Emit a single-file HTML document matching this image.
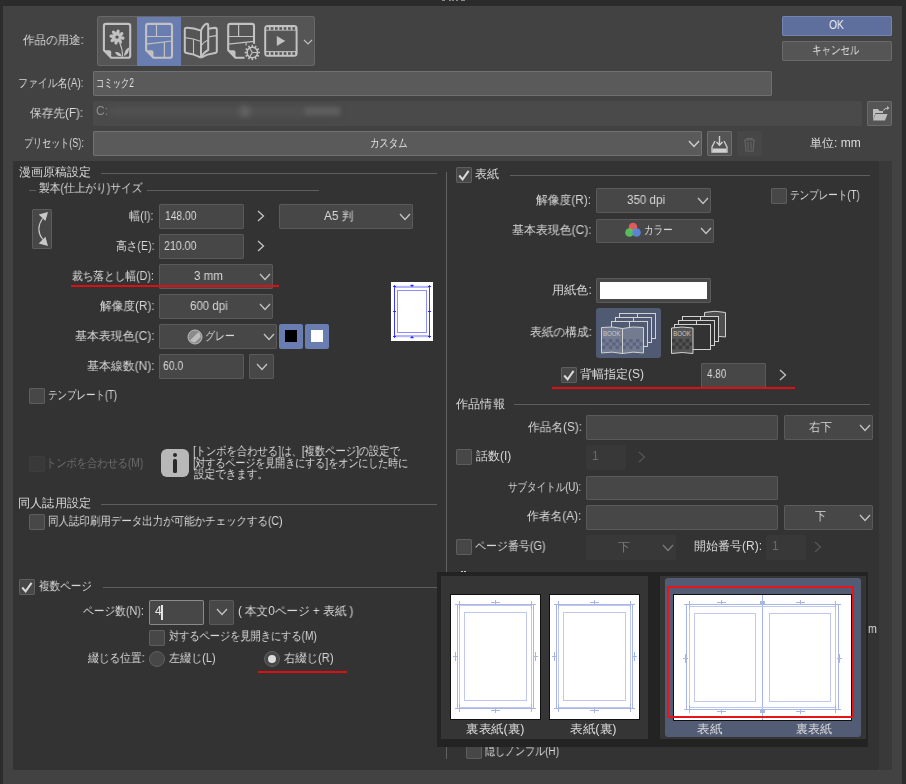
<!DOCTYPE html>
<html><head><meta charset="utf-8"><style>
html,body{margin:0;padding:0;width:906px;height:784px;overflow:hidden;background:#424242}
body{position:relative;font-family:"Liberation Sans",sans-serif;font-size:12px}
.a{position:absolute;box-sizing:border-box}
.t{white-space:nowrap;will-change:transform}
svg.a{overflow:visible}
</style></head><body>
<div class="a" style="left:0px;top:0px;width:906px;height:784px;background:#424242;"></div>
<div class="a" style="left:0px;top:0px;width:906px;height:6px;background:#2b2b2b;"></div>
<div class="a" style="left:0px;top:0px;width:3px;height:784px;background:#2c2c2c;"></div>
<div class="a" style="left:902px;top:0px;width:4px;height:784px;background:#2c2c2c;"></div>
<div class="a" style="left:442px;top:0px;width:3px;height:1px;background:#8a8a8a;"></div>
<div class="a" style="left:449px;top:0px;width:2px;height:1px;background:#8a8a8a;"></div>
<div class="a" style="left:452px;top:0px;width:2px;height:1px;background:#8a8a8a;"></div>
<div class="a" style="left:456px;top:0px;width:2px;height:1px;background:#8a8a8a;"></div>
<div class="a" style="left:461px;top:0px;width:4px;height:1px;background:#8a8a8a;"></div>
<div class="a t" style="left:23.00px;top:33.3px;line-height:14px;font-size:12px;color:#d8d8d8;transform:scaleX(0.9597);transform-origin:0 0;">作品の用途:</div>
<div class="a" style="left:97px;top:16px;width:218px;height:50px;background:#555555;box-shadow:inset 0 0 0 1px #686868;border-radius:3px;"></div>
<div class="a" style="left:137px;top:16.5px;width:44px;height:49.0px;background:#6a7db0;"></div>
<svg class="a" style="left:96px;top:18px;" width="44" height="44" viewBox="0 0 44 44">
<path d="M7.9 32.3 L7.9 8 Q7.9 5.9 10 5.9 L32.1 5.9 Q34.2 5.9 34.2 8 L34.2 37.7 Q34.2 39.8 32.1 39.8 L15.2 39.8 Z" fill="none" stroke="#c2c2c2" stroke-width="2.1" stroke-linejoin="round"/>
<path d="M7.9 32.3 L13.2 32.3 Q15.2 32.3 15.2 34.3 L15.2 39.8 Z" fill="#c2c2c2"/>
<g fill="#c2c2c2" transform="translate(21 19.1)"><ellipse cx="0" cy="-4.6" rx="1.75" ry="3.1" transform="rotate(10)"/><ellipse cx="0" cy="-4.6" rx="1.75" ry="3.1" transform="rotate(55)"/><ellipse cx="0" cy="-4.6" rx="1.75" ry="3.1" transform="rotate(100)"/><ellipse cx="0" cy="-4.6" rx="1.75" ry="3.1" transform="rotate(145)"/><ellipse cx="0" cy="-4.6" rx="1.75" ry="3.1" transform="rotate(190)"/><ellipse cx="0" cy="-4.6" rx="1.75" ry="3.1" transform="rotate(235)"/><ellipse cx="0" cy="-4.6" rx="1.75" ry="3.1" transform="rotate(280)"/><ellipse cx="0" cy="-4.6" rx="1.75" ry="3.1" transform="rotate(325)"/><circle r="2.6"/></g>
<circle cx="21" cy="19.1" r="1.7" fill="#555"/>
<path d="M23.8 25 Q26.6 31 26.6 38.8" fill="none" stroke="#c2c2c2" stroke-width="1.1"/>
<path d="M19 34.2 Q23.5 33.2 25.8 38.2 Q21 38.8 19 34.2 Z M28 38.2 Q28.3 31.8 33 29.6 Q33.6 35.6 28 38.2 Z" fill="#c2c2c2"/>
</svg>
<svg class="a" style="left:138px;top:18px;" width="44" height="44" viewBox="0 0 44 44">
<path d="M8.1 32.3 L8.1 8 Q8.1 5.9 10.2 5.9 L31.9 5.9 Q34 5.9 34 8 L34 37.7 Q34 39.8 31.9 39.8 L15.5 39.8 Z" fill="none" stroke="#c2c2c2" stroke-width="2.1" stroke-linejoin="round"/>
<path d="M8.1 32.3 L13.5 32.3 Q15.5 32.3 15.5 34.3 L15.5 39.8 Z" fill="#c2c2c2"/>
<path d="M18.5 5.9 L18.5 18.5 M8.1 18.5 L34 18.5 M8.1 26.1 L34 23 M26.4 24.3 L26.4 39.8" fill="none" stroke="#c2c2c2" stroke-width="1.2"/>
</svg>
<svg class="a" style="left:180px;top:18px;" width="44" height="44" viewBox="0 0 44 44">
<g fill="none" stroke="#c2c2c2" stroke-width="2" stroke-linejoin="round">
<path d="M21 12.6 Q13 9.6 6.6 9.8 Q4.8 9.8 4.8 11.6 L4.8 33 Q4.8 34.8 6.6 35 Q14 36 21 39.6"/>
<path d="M21 39.6 L21 12.6 Q23 7.2 26.6 5.8 Q28.2 5.4 28.2 7.2 L28.2 32 Q23.8 34.2 21 39.6"/>
<path d="M28.2 10.8 L35 9.8 Q36.8 9.8 36.8 11.6 L36.8 33 Q36.8 34.8 35 35 Q27 36 21 39.6"/>
</g>
<path d="M5 19.6 Q14 20.4 21 23.5 M13.5 21 L13.5 36.3 M21.5 27.5 Q24 23.6 28 22 M28.2 19 Q33 18 36.8 17.6" fill="none" stroke="#c2c2c2" stroke-width="1.1"/>
</svg>
<svg class="a" style="left:222px;top:18px;" width="44" height="44" viewBox="0 0 44 44">
<path d="M22.5 39.8 L13.5 39.8 L6.2 32.3 L6.2 8 Q6.2 5.9 8.3 5.9 L29.9 5.9 Q32 5.9 32 8 L32 25.8" fill="none" stroke="#c2c2c2" stroke-width="2.1" stroke-linejoin="round"/>
<path d="M6.2 32.3 L11.5 32.3 Q13.5 32.3 13.5 34.3 L13.5 39.8 Z" fill="#c2c2c2"/>
<path d="M16.6 5.9 L16.6 18.5 M6.2 18.5 L32 18.5 M6.2 26.1 L32 23.3 M24.1 24.2 L24.1 27.5" fill="none" stroke="#c2c2c2" stroke-width="1.2"/>
<g transform="translate(30.3 34.5)">
<circle r="5.8" fill="#555"/>
<circle r="5.2" fill="none" stroke="#c2c2c2" stroke-width="1.4"/>
<g fill="#c2c2c2"><rect x="-0.8" y="-7.6" width="1.6" height="2.6" transform="rotate(0)"/><rect x="-0.8" y="-7.6" width="1.6" height="2.6" transform="rotate(30)"/><rect x="-0.8" y="-7.6" width="1.6" height="2.6" transform="rotate(60)"/><rect x="-0.8" y="-7.6" width="1.6" height="2.6" transform="rotate(90)"/><rect x="-0.8" y="-7.6" width="1.6" height="2.6" transform="rotate(120)"/><rect x="-0.8" y="-7.6" width="1.6" height="2.6" transform="rotate(150)"/><rect x="-0.8" y="-7.6" width="1.6" height="2.6" transform="rotate(180)"/><rect x="-0.8" y="-7.6" width="1.6" height="2.6" transform="rotate(210)"/><rect x="-0.8" y="-7.6" width="1.6" height="2.6" transform="rotate(240)"/><rect x="-0.8" y="-7.6" width="1.6" height="2.6" transform="rotate(270)"/><rect x="-0.8" y="-7.6" width="1.6" height="2.6" transform="rotate(300)"/><rect x="-0.8" y="-7.6" width="1.6" height="2.6" transform="rotate(330)"/></g>
<path d="M0 0 L5 0 M0 0 L-2.5 4.3 M0 0 L-2.5 -4.3" stroke="#c2c2c2" stroke-width="1.2"/>
</g>
</svg>
<svg class="a" style="left:260px;top:18px;" width="44" height="44" viewBox="0 0 44 44">
<rect x="5.2" y="8" width="31.4" height="29.7" rx="2.5" fill="none" stroke="#c2c2c2" stroke-width="2"/>
<rect x="5.2" y="8" width="31.4" height="4.6" fill="#c2c2c2"/>
<rect x="5.2" y="33.1" width="31.4" height="4.6" fill="#c2c2c2"/>
<g fill="#575757"><rect x="6.30" y="9.2" width="2.7" height="2.6"/><rect x="6.30" y="34.2" width="2.7" height="2.6"/><rect x="10.65" y="9.2" width="2.7" height="2.6"/><rect x="10.65" y="34.2" width="2.7" height="2.6"/><rect x="15.00" y="9.2" width="2.7" height="2.6"/><rect x="15.00" y="34.2" width="2.7" height="2.6"/><rect x="19.35" y="9.2" width="2.7" height="2.6"/><rect x="19.35" y="34.2" width="2.7" height="2.6"/><rect x="23.70" y="9.2" width="2.7" height="2.6"/><rect x="23.70" y="34.2" width="2.7" height="2.6"/><rect x="28.05" y="9.2" width="2.7" height="2.6"/><rect x="28.05" y="34.2" width="2.7" height="2.6"/><rect x="32.40" y="9.2" width="2.7" height="2.6"/><rect x="32.40" y="34.2" width="2.7" height="2.6"/></g>
<path d="M16.8 18 L16.8 28 L25.3 23 Z" fill="#c2c2c2"/>
</svg>
<svg class="a" style="left:302.5px;top:38.5px;" width="10" height="6" viewBox="0 0 10 6"><path d="M1 1 L5.0 5 L9 1" fill="none" stroke="#bdbdbd" stroke-width="1.2"/></svg>
<div class="a" style="left:782px;top:16px;width:110px;height:20px;background:#5f6f9d;box-shadow:inset 0 0 0 1px #7483b0;border-radius:2px;"></div>
<div class="a t" style="left:828.70px;top:18.3px;line-height:14px;font-size:12px;color:#eeeeee;transform:scaleX(0.8588);transform-origin:0 0;">OK</div>
<div class="a" style="left:782px;top:41px;width:110px;height:20px;background:#555555;box-shadow:inset 0 0 0 1px #6a6a6a;border-radius:2px;"></div>
<div class="a t" style="left:811.76px;top:43.3px;line-height:14px;font-size:12px;color:#e0e0e0;transform:scaleX(0.7915);transform-origin:0 0;">キャンセル</div>
<div class="a t" style="left:18.18px;top:75.8px;line-height:14px;font-size:12px;color:#d8d8d8;transform:scaleX(0.8247);transform-origin:0 0;">ファイル名(A):</div>
<div class="a" style="left:93px;top:71px;width:679px;height:25px;background:#5a5a5a;box-shadow:inset 0 0 0 1px #707070;border-radius:2px;"></div>
<div class="a t" style="left:95.62px;top:75.8px;line-height:14px;font-size:12px;color:#e4e4e4;transform:scaleX(0.6923);transform-origin:0 0;">コミック2</div>
<div class="a t" style="left:30.00px;top:105.8px;line-height:14px;font-size:12px;color:#d8d8d8;transform:scaleX(0.9722);transform-origin:0 0;">保存先(F):</div>
<div class="a" style="left:93px;top:101px;width:769px;height:25px;background:#4a4a4a;border-radius:2px;"></div>
<div class="a t" style="left:96.22px;top:103.8px;line-height:14px;font-size:12px;color:#8c8c8c;transform:scaleX(0.9800);transform-origin:0 0;">C:</div>
<div class="a" style="left:108px;top:107px;width:232px;height:9px;background:#555555;filter:blur(3px);opacity:.7"></div>
<div class="a" style="left:240px;top:106px;width:10px;height:11px;background:#666;filter:blur(3px);border-radius:5px"></div>
<div class="a" style="left:305px;top:107px;width:35px;height:8px;background:#5e5e5e;filter:blur(2px)"></div>
<div class="a" style="left:867px;top:101px;width:25px;height:25px;background:#555555;box-shadow:inset 0 0 0 1px #6a6a6a;border-radius:2px;"></div>
<svg class="a" style="left:868px;top:102px;" width="24" height="24" viewBox="0 0 24 24"><path d="M5 7 L10 7 L11.5 9 L15 9 L15 11 L7.5 11 L5 18 Z" fill="#bdbdbd"/><path d="M7.5 12 L19.5 12 L17 18.5 L5 18.5 Z" fill="#bdbdbd"/><path d="M15.5 8.5 Q17 6 20 6" fill="none" stroke="#bdbdbd" stroke-width="1.2"/><path d="M19 4 L21.5 6 L19 8 Z" fill="#bdbdbd"/></svg>
<div class="a t" style="left:23.75px;top:135.8px;line-height:14px;font-size:12px;color:#d8d8d8;transform:scaleX(0.7532);transform-origin:0 0;">プリセット(S):</div>
<div class="a" style="left:93px;top:131px;width:609px;height:25px;background:#5a5a5a;box-shadow:inset 0 0 0 1px #727272;border-radius:2px;"></div>
<div class="a t" style="left:370.22px;top:135.8px;line-height:14px;font-size:12px;color:#e4e4e4;transform:scaleX(0.7826);transform-origin:0 0;">カスタム</div>
<svg class="a" style="left:687.5px;top:139.75px;" width="12" height="7.5" viewBox="0 0 12 7.5"><path d="M1 1 L6.0 6.5 L11 1" fill="none" stroke="#cfcfcf" stroke-width="1.4"/></svg>
<div class="a" style="left:707px;top:131px;width:25px;height:25px;background:#555555;box-shadow:inset 0 0 0 1px #6d6d6d;border-radius:2px;"></div>
<svg class="a" style="left:707px;top:131px;" width="25" height="25" viewBox="0 0 25 25"><path d="M8 10 L5 16 L5 21 L20 21 L20 16 L17 10" fill="none" stroke="#d0d0d0" stroke-width="1.3"/><rect x="5.5" y="17.5" width="14" height="3.5" fill="#d0d0d0"/><path d="M12.5 5 L12.5 14 M9.5 11 L12.5 14.2 L15.5 11" fill="none" stroke="#d0d0d0" stroke-width="1.4"/></svg>
<div class="a" style="left:737px;top:131px;width:25px;height:25px;background:#474747;border-radius:2px;"></div>
<svg class="a" style="left:737px;top:131px;" width="25" height="25" viewBox="0 0 25 25"><path d="M7 9 L18 9 M10 9 L10 7.5 L15 7.5 L15 9 M8 9.5 L9 20 L16 20 L17 9.5 M11 11 L11 18.5 M14 11 L14 18.5" fill="none" stroke="#666" stroke-width="1.1"/></svg>
<div class="a t" style="left:810.00px;top:135.8px;line-height:14px;font-size:12px;color:#dcdcdc;transform:scaleX(1.0000);transform-origin:0 0;">単位: mm</div>
<div class="a" style="left:13px;top:161px;width:866px;height:609px;background:#333333;"></div>
<div class="a" style="left:879px;top:161px;width:13px;height:609px;background:#393939;"></div>
<div class="a" style="left:446px;top:172px;width:1px;height:587px;background:#616161"></div>
<div class="a t" style="left:19.00px;top:164.8px;line-height:14px;font-size:12px;color:#d8d8d8;transform:scaleX(1.0000);transform-origin:0 0;">漫画原稿設定</div>
<div class="a" style="left:101px;top:173px;width:336px;height:1px;background:#5e5e5e"></div>
<div class="a" style="left:29px;top:190px;width:7px;height:1px;background:#5e5e5e"></div>
<div class="a t" style="left:38.51px;top:181.3px;line-height:14px;font-size:12px;color:#d8d8d8;transform:scaleX(0.8913);transform-origin:0 0;">製本(仕上がり)サイズ</div>
<div class="a" style="left:147px;top:190px;width:172px;height:1px;background:#5e5e5e"></div>
<div class="a" style="left:32px;top:209px;width:20px;height:40px;background:#474747;box-shadow:inset 0 0 0 1px #5c5c5c;border-radius:2px;"></div>
<svg class="a" style="left:32px;top:209px;" width="20" height="40" viewBox="0 0 20 40"><path d="M10.5 9.5 Q3 20.5 10.8 30.5" fill="none" stroke="#c8c8c8" stroke-width="1.1"/><path d="M6.7 5.5 L16 3 L13.4 12 Z M6.7 34.5 L16 37 L13.4 27.8 Z" fill="#c8c8c8"/></svg>
<div class="a t" style="left:129.00px;top:208.8px;line-height:14px;font-size:12px;color:#d8d8d8;transform:scaleX(0.9231);transform-origin:0 0;">幅(I):</div>
<div class="a" style="left:159px;top:204px;width:85px;height:25px;background:#474747;box-shadow:inset 0 0 0 1px #5a5a5a;border-radius:2px;"></div>
<div class="a t" style="left:164.64px;top:208.60000000000002px;line-height:14px;font-size:12px;color:#d8d8d8;transform:scaleX(0.8571);transform-origin:0 0;">148.00</div>
<svg class="a" style="left:257.25px;top:210.0px;" width="7.5" height="12" viewBox="0 0 7.5 12"><path d="M1 1 L6.5 6.0 L1 11" fill="none" stroke="#c4c4c4" stroke-width="1.3"/></svg>
<div class="a" style="left:279px;top:204px;width:134px;height:25px;background:#474747;box-shadow:inset 0 0 0 1px #5a5a5a;border-radius:2px;"></div>
<svg class="a" style="left:398.6px;top:212.75px;" width="12" height="7.5" viewBox="0 0 12 7.5"><path d="M1 1 L6.0 6.5 L11 1" fill="none" stroke="#c4c4c4" stroke-width="1.3"/></svg>
<div class="a t" style="left:324.45px;top:208.8px;line-height:14px;font-size:12px;color:#d8d8d8;transform:scaleX(0.9828);transform-origin:0 0;">A5 判</div>
<div class="a t" style="left:115.61px;top:238.8px;line-height:14px;font-size:12px;color:#d8d8d8;transform:scaleX(0.8902);transform-origin:0 0;">高さ(E):</div>
<div class="a" style="left:159px;top:234px;width:85px;height:25px;background:#474747;box-shadow:inset 0 0 0 1px #5a5a5a;border-radius:2px;"></div>
<div class="a t" style="left:163.81px;top:238.60000000000002px;line-height:14px;font-size:12px;color:#d8d8d8;transform:scaleX(0.8857);transform-origin:0 0;">210.00</div>
<svg class="a" style="left:257.25px;top:240.0px;" width="7.5" height="12" viewBox="0 0 7.5 12"><path d="M1 1 L6.5 6.0 L1 11" fill="none" stroke="#c4c4c4" stroke-width="1.3"/></svg>
<div class="a t" style="left:72.11px;top:268.8px;line-height:14px;font-size:12px;color:#d8d8d8;transform:scaleX(0.8889);transform-origin:0 0;">裁ち落とし幅(D):</div>
<div class="a" style="left:159px;top:264px;width:114px;height:25px;background:#474747;box-shadow:inset 0 0 0 1px #5a5a5a;border-radius:2px;"></div>
<svg class="a" style="left:258.6px;top:272.75px;" width="12" height="7.5" viewBox="0 0 12 7.5"><path d="M1 1 L6.0 6.5 L11 1" fill="none" stroke="#c4c4c4" stroke-width="1.3"/></svg>
<div class="a t" style="left:194.34px;top:268.8px;line-height:14px;font-size:12px;color:#d8d8d8;transform:scaleX(0.9643);transform-origin:0 0;">3 mm</div>
<div class="a" style="left:71px;top:284.5px;width:208px;height:2.5px;background:#dc1014"></div>
<div class="a t" style="left:99.50px;top:298.8px;line-height:14px;font-size:12px;color:#d8d8d8;transform:scaleX(0.9727);transform-origin:0 0;">解像度(R):</div>
<div class="a" style="left:159px;top:294px;width:114px;height:25px;background:#474747;box-shadow:inset 0 0 0 1px #5a5a5a;border-radius:2px;"></div>
<svg class="a" style="left:258.6px;top:302.75px;" width="12" height="7.5" viewBox="0 0 12 7.5"><path d="M1 1 L6.0 6.5 L11 1" fill="none" stroke="#c4c4c4" stroke-width="1.3"/></svg>
<div class="a t" style="left:190.44px;top:298.8px;line-height:14px;font-size:12px;color:#d8d8d8;transform:scaleX(0.9579);transform-origin:0 0;">600 dpi</div>
<div class="a t" style="left:74.51px;top:328.8px;line-height:14px;font-size:12px;color:#d8d8d8;transform:scaleX(0.9936);transform-origin:0 0;">基本表現色(C):</div>
<div class="a" style="left:159px;top:324px;width:118px;height:25px;background:#474747;box-shadow:inset 0 0 0 1px #5a5a5a;border-radius:2px;"></div>
<svg class="a" style="left:262.6px;top:332.75px;" width="12" height="7.5" viewBox="0 0 12 7.5"><path d="M1 1 L6.0 6.5 L11 1" fill="none" stroke="#c4c4c4" stroke-width="1.3"/></svg>
<svg class="a" style="left:187px;top:329px;" width="16" height="16" viewBox="0 0 16 16"><circle cx="8" cy="8" r="7" fill="#8a8a8a" stroke="#bbb" stroke-width="1"/><path d="M3 11.5 L11.5 3 Q14 5 13.5 8 L8 13.5 Q5 13.5 3 11.5Z" fill="#bdbdbd"/></svg>
<div class="a t" style="left:204.94px;top:328.8px;line-height:14px;font-size:12px;color:#d8d8d8;transform:scaleX(0.8303);transform-origin:0 0;">グレー</div>
<div class="a" style="left:279px;top:324px;width:24px;height:25px;background:#6a7db0;border-radius:2px;"></div>
<div class="a" style="left:285px;top:330px;width:12px;height:12px;background:#000;"></div>
<div class="a" style="left:305px;top:324px;width:24px;height:25px;background:#6a7db0;border-radius:2px;"></div>
<div class="a" style="left:311px;top:330px;width:12px;height:12px;background:#fff;"></div>
<div class="a t" style="left:86.51px;top:358.8px;line-height:14px;font-size:12px;color:#d8d8d8;transform:scaleX(0.9924);transform-origin:0 0;">基本線数(N):</div>
<div class="a" style="left:159px;top:354px;width:85px;height:25px;background:#474747;box-shadow:inset 0 0 0 1px #5a5a5a;border-radius:2px;"></div>
<div class="a t" style="left:163.44px;top:358.6px;line-height:14px;font-size:12px;color:#d8d8d8;transform:scaleX(0.8636);transform-origin:0 0;">60.0</div>
<div class="a" style="left:249px;top:354px;width:25px;height:25px;background:#474747;box-shadow:inset 0 0 0 1px #5a5a5a;border-radius:2px;"></div>
<svg class="a" style="left:255.5px;top:362.75px;" width="12" height="7.5" viewBox="0 0 12 7.5"><path d="M1 1 L6.0 6.5 L11 1" fill="none" stroke="#c4c4c4" stroke-width="1.3"/></svg>
<svg class="a" style="left:391px;top:282px;" width="42" height="59" viewBox="0 0 42 59"><rect width="42" height="59" fill="#fff"/>
<rect x="3.5" y="3.8" width="35" height="2.2" fill="#b4b4ff"/><rect x="3.5" y="53" width="35" height="2.2" fill="#b4b4ff"/>
<path d="M3.5 3 L3.5 56 M38.5 3 L38.5 56" stroke="#3c3cff" stroke-width="1"/>
<rect x="6.5" y="8.5" width="29" height="42" fill="none" stroke="#8c8cff" stroke-width="1"/>
<path d="M2 4.5 L5 4.5 M37 4.5 L40 4.5 M2 54.5 L5 54.5 M37 54.5 L40 54.5 M19.5 3.3 L22.5 3.3 M21 3 L21 5 M19.5 55.7 L22.5 55.7 M21 54 L21 56 M2 29.5 L5 29.5 M37 29.5 L40 29.5" stroke="#2a2aff" stroke-width="1.2"/>
</svg>
<div class="a" style="left:29px;top:388px;width:16px;height:16px;background:#474747;box-shadow:inset 0 0 0 1px #5e5e5e;border-radius:2px;"></div>
<div class="a t" style="left:48.21px;top:388.3px;line-height:14px;font-size:12px;color:#d8d8d8;transform:scaleX(0.7907);transform-origin:0 0;">テンプレート(T)</div>
<div class="a" style="left:29px;top:456px;width:16px;height:16px;background:#393939;box-shadow:inset 0 0 0 1px #3e3e3e;border-radius:2px;"></div>
<div class="a t" style="left:45.59px;top:456.3px;line-height:14px;font-size:12px;color:#6e6e6e;transform:scaleX(0.8532);transform-origin:0 0;">トンボを合わせる(M)</div>
<div class="a" style="left:161px;top:449px;width:28px;height:28px;background:#b8b8b8;border-radius:6px;"></div>
<div class="a" style="left:172.6px;top:452.5px;width:4.599999999999994px;height:4.600000000000023px;background:#2a2a2a;border-radius:3px;"></div>
<div class="a" style="left:173px;top:459.3px;width:4px;height:13.5px;background:#2a2a2a;border-radius:1.5px;"></div>
<div class="a t" style="left:193.14px;top:444.8px;line-height:12px;font-size:12px;color:#d8d8d8;transform:scaleX(0.8583);transform-origin:0 0;">[トンボを合わせる]は、[複数ページ]の設定で</div>
<div class="a t" style="left:193.17px;top:456.8px;line-height:12px;font-size:12px;color:#d8d8d8;transform:scaleX(0.8307);transform-origin:0 0;">[対するページを見開きにする]をオンにした時に</div>
<div class="a t" style="left:194.00px;top:468.3px;line-height:12px;font-size:12px;color:#d8d8d8;transform:scaleX(0.8816);transform-origin:0 0;">設定できます。</div>
<div class="a t" style="left:17.99px;top:495.8px;line-height:14px;font-size:12px;color:#d8d8d8;transform:scaleX(1.0143);transform-origin:0 0;">同人誌用設定</div>
<div class="a" style="left:101px;top:504px;width:336px;height:1px;background:#5e5e5e"></div>
<div class="a" style="left:29px;top:514px;width:16px;height:16px;background:#474747;box-shadow:inset 0 0 0 1px #5e5e5e;border-radius:2px;"></div>
<div class="a t" style="left:48.13px;top:514.3px;line-height:14px;font-size:12px;color:#d8d8d8;transform:scaleX(0.8727);transform-origin:0 0;">同人誌印刷用データ出力が可能かチェックする(C)</div>
<div class="a" style="left:19px;top:579px;width:16px;height:16px;background:#474747;box-shadow:inset 0 0 0 1px #5e5e5e;border-radius:2px;"></div>
<svg class="a" style="left:19px;top:579px;" width="16" height="16" viewBox="0 0 16 16"><path d="M3.2 8.5 L6.6 12.3 L12.6 3.9" fill="none" stroke="#dadada" stroke-width="2"/></svg>
<div class="a t" style="left:39.00px;top:579.3px;line-height:14px;font-size:12px;color:#d8d8d8;transform:scaleX(0.8814);transform-origin:0 0;">複数ページ</div>
<div class="a" style="left:103px;top:587px;width:334px;height:1px;background:#5e5e5e"></div>
<div class="a t" style="left:83.11px;top:604.3px;line-height:14px;font-size:12px;color:#d8d8d8;transform:scaleX(0.8939);transform-origin:0 0;">ページ数(N):</div>
<div class="a" style="left:149px;top:600px;width:55px;height:25px;background:#474747;box-shadow:inset 0 0 0 1px #8a8a8a;border-radius:2px;"></div>
<div class="a t" style="left:155px;top:604.3px;line-height:14px;font-size:12px;color:#e6e6e6;">4</div>
<div class="a" style="left:161px;top:605px;width:1.5px;height:15px;background:#e6e6e6"></div>
<div class="a" style="left:209px;top:600px;width:25px;height:25px;background:#474747;box-shadow:inset 0 0 0 1px #5a5a5a;border-radius:2px;"></div>
<svg class="a" style="left:215.5px;top:608.05px;" width="12" height="7.5" viewBox="0 0 12 7.5"><path d="M1 1 L6.0 6.5 L11 1" fill="none" stroke="#c4c4c4" stroke-width="1.3"/></svg>
<div class="a t" style="left:237.63px;top:604.3px;line-height:14px;font-size:12px;color:#d8d8d8;transform:scaleX(0.9692);transform-origin:0 0;">( 本文0ページ + 表紙 )</div>
<div class="a" style="left:149px;top:630px;width:16px;height:16px;background:#474747;box-shadow:inset 0 0 0 1px #5e5e5e;border-radius:2px;"></div>
<div class="a t" style="left:169.00px;top:629.3px;line-height:14px;font-size:12px;color:#d8d8d8;transform:scaleX(0.8497);transform-origin:0 0;">対するページを見開きにする(M)</div>
<div class="a t" style="left:87.50px;top:651.3px;line-height:14px;font-size:12px;color:#d8d8d8;transform:scaleX(0.8952);transform-origin:0 0;">綴じる位置:</div>
<svg class="a" style="left:149px;top:651px;" width="16" height="16" viewBox="0 0 16 16"><circle cx="8" cy="8" r="7.5" fill="#474747" stroke="#606060" stroke-width="1"/></svg>
<div class="a t" style="left:169.00px;top:651.3px;line-height:14px;font-size:12px;color:#d8d8d8;transform:scaleX(0.9200);transform-origin:0 0;">左綴じ(L)</div>
<svg class="a" style="left:264px;top:651px;" width="16" height="16" viewBox="0 0 16 16"><circle cx="8" cy="8" r="7.5" fill="#474747" stroke="#606060" stroke-width="1"/><circle cx="8" cy="8" r="4" fill="#dcdcdc"/></svg>
<div class="a t" style="left:284.00px;top:651.3px;line-height:14px;font-size:12px;color:#d8d8d8;transform:scaleX(0.9423);transform-origin:0 0;">右綴じ(R)</div>
<div class="a" style="left:257.5px;top:671px;width:89.5px;height:2px;background:#dc1014"></div>
<div class="a" style="left:456px;top:167px;width:16px;height:16px;background:#474747;box-shadow:inset 0 0 0 1px #5e5e5e;border-radius:2px;"></div>
<svg class="a" style="left:456px;top:167px;" width="16" height="16" viewBox="0 0 16 16"><path d="M3.2 8.5 L6.6 12.3 L12.6 3.9" fill="none" stroke="#dadada" stroke-width="2"/></svg>
<div class="a t" style="left:475.00px;top:167.3px;line-height:14px;font-size:12px;color:#d8d8d8;transform:scaleX(1.0000);transform-origin:0 0;">表紙</div>
<div class="a" style="left:510px;top:175px;width:360px;height:1px;background:#5e5e5e"></div>
<div class="a t" style="left:536.40px;top:192.8px;line-height:14px;font-size:12px;color:#d8d8d8;transform:scaleX(0.9818);transform-origin:0 0;">解像度(R):</div>
<div class="a" style="left:596px;top:188px;width:115px;height:24.5px;background:#474747;box-shadow:inset 0 0 0 1px #5a5a5a;border-radius:2px;"></div>
<svg class="a" style="left:696.6px;top:196.5px;" width="12" height="7.5" viewBox="0 0 12 7.5"><path d="M1 1 L6.0 6.5 L11 1" fill="none" stroke="#c4c4c4" stroke-width="1.3"/></svg>
<div class="a t" style="left:626.88px;top:192.8px;line-height:14px;font-size:12px;color:#d8d8d8;transform:scaleX(0.9658);transform-origin:0 0;">350 dpi</div>
<div class="a" style="left:771px;top:188px;width:16px;height:16px;background:#474747;box-shadow:inset 0 0 0 1px #5e5e5e;border-radius:2px;"></div>
<div class="a t" style="left:789.90px;top:188.3px;line-height:14px;font-size:12px;color:#d8d8d8;transform:scaleX(0.7977);transform-origin:0 0;">テンプレート(T)</div>
<div class="a t" style="left:511.91px;top:222.8px;line-height:14px;font-size:12px;color:#d8d8d8;transform:scaleX(0.9936);transform-origin:0 0;">基本表現色(C):</div>
<div class="a" style="left:596px;top:218.5px;width:118px;height:24.0px;background:#474747;box-shadow:inset 0 0 0 1px #5a5a5a;border-radius:2px;"></div>
<svg class="a" style="left:699.6px;top:226.75px;" width="12" height="7.5" viewBox="0 0 12 7.5"><path d="M1 1 L6.0 6.5 L11 1" fill="none" stroke="#c4c4c4" stroke-width="1.3"/></svg>
<svg class="a" style="left:624px;top:221px;" width="18" height="18" viewBox="0 0 18 18"><circle cx="9" cy="6" r="4.3" fill="#e05a5a"/><circle cx="5.5" cy="11.5" r="4.3" fill="#5ac85a" fill-opacity=".92"/><circle cx="12.5" cy="11.5" r="4.3" fill="#5a8ae0" fill-opacity=".92"/></svg>
<div class="a t" style="left:644.01px;top:222.8px;line-height:14px;font-size:12px;color:#d8d8d8;transform:scaleX(0.7941);transform-origin:0 0;">カラー</div>
<div class="a t" style="left:551.99px;top:283.0px;line-height:14px;font-size:12px;color:#d8d8d8;transform:scaleX(1.0108);transform-origin:0 0;">用紙色:</div>
<div class="a" style="left:596px;top:278px;width:115px;height:24.5px;background:#474747;box-shadow:inset 0 0 0 1px #5a5a5a;border-radius:2px;"></div>
<div class="a" style="left:600px;top:282px;width:107px;height:16.5px;background:#ffffff;"></div>
<div class="a t" style="left:529.82px;top:325.3px;line-height:14px;font-size:12px;color:#d8d8d8;transform:scaleX(0.9770);transform-origin:0 0;">表紙の構成:</div>
<div class="a" style="left:596px;top:308px;width:65px;height:49.5px;background:#505a73;border-radius:3px;"></div>
<svg class="a" style="left:596px;top:308px;" width="65" height="50" viewBox="0 0 65 50"><g fill="#505a73" stroke="#d2d2d2" stroke-width="1">
<rect x="23.5" y="5.5" width="36" height="25"/>
<rect x="19.5" y="9.5" width="36" height="25"/>
<rect x="15.5" y="13.5" width="36" height="25"/>
</g>
<path d="M41.5 5.5 L41.5 9.5 M37.5 9.5 L37.5 13.5 M33.5 13.5 L33.5 20" stroke="#d2d2d2" stroke-width="1"/>
<path d="M5.5 19.5 Q16 18 26.5 20.5 L26.5 45.5 Q16 43 5.5 45 Z M26.5 20.5 Q37 18 47.5 19.5 L47.5 45 Q37 43 26.5 45.5 Z" fill="#737b90"/>
<rect x="6.00" y="31.00" width="3.4" height="3.4" fill="#5b6580"/><rect x="12.80" y="31.00" width="3.4" height="3.4" fill="#5b6580"/><rect x="19.60" y="31.00" width="3.4" height="3.4" fill="#5b6580"/><rect x="26.40" y="31.00" width="3.4" height="3.4" fill="#5b6580"/><rect x="33.20" y="31.00" width="3.4" height="3.4" fill="#5b6580"/><rect x="40.00" y="31.00" width="3.4" height="3.4" fill="#5b6580"/><rect x="9.40" y="34.40" width="3.4" height="3.4" fill="#5b6580"/><rect x="16.20" y="34.40" width="3.4" height="3.4" fill="#5b6580"/><rect x="23.00" y="34.40" width="3.4" height="3.4" fill="#5b6580"/><rect x="29.80" y="34.40" width="3.4" height="3.4" fill="#5b6580"/><rect x="36.60" y="34.40" width="3.4" height="3.4" fill="#5b6580"/><rect x="43.40" y="34.40" width="3.4" height="3.4" fill="#5b6580"/><rect x="6.00" y="37.80" width="3.4" height="3.4" fill="#5b6580"/><rect x="12.80" y="37.80" width="3.4" height="3.4" fill="#5b6580"/><rect x="19.60" y="37.80" width="3.4" height="3.4" fill="#5b6580"/><rect x="26.40" y="37.80" width="3.4" height="3.4" fill="#5b6580"/><rect x="33.20" y="37.80" width="3.4" height="3.4" fill="#5b6580"/><rect x="40.00" y="37.80" width="3.4" height="3.4" fill="#5b6580"/>
<path d="M5.5 19.5 Q16 18 26.5 20.5 L26.5 45.5 Q16 43 5.5 45 Z M26.5 20.5 Q37 18 47.5 19.5 L47.5 45 Q37 43 26.5 45.5 Z" fill="none" stroke="#d2d2d2" stroke-width="1"/>
<text x="7" y="28.2" font-size="7" fill="#c8c8c8" font-family="Liberation Sans" textLength="17.5" lengthAdjust="spacingAndGlyphs">BOOK</text>
</svg>
<svg class="a" style="left:668px;top:308px;" width="60" height="50" viewBox="0 0 60 50"><path d="M36.5 4.5 Q47 2 57.5 4.5 L57.5 29 Q47 27 36.5 29 Z" fill="#4f4f4f" stroke="#d2d2d2" stroke-width="1"/>
<g fill="#333" stroke="#d2d2d2" stroke-width="1">
<rect x="14.5" y="8.5" width="36" height="25"/>
<rect x="10.5" y="12.5" width="36" height="25"/>
<rect x="6.5" y="16.5" width="36" height="25"/>
</g>
<path d="M32.5 8.5 L32.5 12.5 M28.5 12.5 L28.5 16.5" stroke="#d2d2d2" stroke-width="1"/>
<path d="M3.5 20 Q14 18 25 20 L25 45.5 Q14 43.5 3.5 45.5 Z" fill="#545454"/>
<rect x="4.00" y="31.00" width="3.4" height="3.4" fill="#3a3a3a"/><rect x="10.80" y="31.00" width="3.4" height="3.4" fill="#3a3a3a"/><rect x="17.60" y="31.00" width="3.4" height="3.4" fill="#3a3a3a"/><rect x="7.40" y="34.40" width="3.4" height="3.4" fill="#3a3a3a"/><rect x="14.20" y="34.40" width="3.4" height="3.4" fill="#3a3a3a"/><rect x="21.00" y="34.40" width="3.4" height="3.4" fill="#3a3a3a"/><rect x="4.00" y="37.80" width="3.4" height="3.4" fill="#3a3a3a"/><rect x="10.80" y="37.80" width="3.4" height="3.4" fill="#3a3a3a"/><rect x="17.60" y="37.80" width="3.4" height="3.4" fill="#3a3a3a"/>
<path d="M3.5 20 Q14 18 25 20 L25 45.5 Q14 43.5 3.5 45.5 Z" fill="none" stroke="#d2d2d2" stroke-width="1"/>
<text x="5.2" y="28.2" font-size="7" fill="#c8c8c8" font-family="Liberation Sans" textLength="17.5" lengthAdjust="spacingAndGlyphs">BOOK</text>
</svg>
<div class="a" style="left:561px;top:367px;width:16px;height:16px;background:#474747;box-shadow:inset 0 0 0 1px #5e5e5e;border-radius:2px;"></div>
<svg class="a" style="left:561px;top:367px;" width="16" height="16" viewBox="0 0 16 16"><path d="M3.2 8.5 L6.6 12.3 L12.6 3.9" fill="none" stroke="#dadada" stroke-width="2"/></svg>
<div class="a t" style="left:580.20px;top:366.90000000000003px;line-height:14px;font-size:12px;color:#d8d8d8;transform:scaleX(1.0000);transform-origin:0 0;">背幅指定(S)</div>
<div class="a" style="left:701px;top:363px;width:65px;height:24.5px;background:#474747;box-shadow:inset 0 0 0 1px #5a5a5a;border-radius:2px;"></div>
<div class="a t" style="left:706.50px;top:367.3px;line-height:14px;font-size:12px;color:#d8d8d8;transform:scaleX(0.8261);transform-origin:0 0;">4.80</div>
<svg class="a" style="left:779.25px;top:369.0px;" width="7.5" height="12" viewBox="0 0 7.5 12"><path d="M1 1 L6.5 6.0 L1 11" fill="none" stroke="#c4c4c4" stroke-width="1.3"/></svg>
<div class="a" style="left:552px;top:387px;width:243px;height:2px;background:#dc1014"></div>
<div class="a t" style="left:455.90px;top:396.8px;line-height:14px;font-size:12px;color:#d8d8d8;transform:scaleX(1.0149);transform-origin:0 0;">作品情報</div>
<div class="a" style="left:514px;top:404px;width:356px;height:1px;background:#5e5e5e"></div>
<div class="a t" style="left:527.80px;top:419.90000000000003px;line-height:14px;font-size:12px;color:#d8d8d8;transform:scaleX(0.9741);transform-origin:0 0;">作品名(S):</div>
<div class="a" style="left:586px;top:415px;width:192px;height:25px;background:#474747;box-shadow:inset 0 0 0 1px #5a5a5a;border-radius:2px;"></div>
<div class="a" style="left:783.5px;top:415px;width:89.5px;height:25px;background:#474747;box-shadow:inset 0 0 0 1px #5a5a5a;border-radius:2px;"></div>
<svg class="a" style="left:858.6px;top:423.75px;" width="12" height="7.5" viewBox="0 0 12 7.5"><path d="M1 1 L6.0 6.5 L11 1" fill="none" stroke="#c4c4c4" stroke-width="1.3"/></svg>
<div class="a t" style="left:808.80px;top:419.8px;line-height:14px;font-size:12px;color:#d8d8d8;transform:scaleX(0.9583);transform-origin:0 0;">右下</div>
<div class="a" style="left:456px;top:449px;width:16px;height:16px;background:#474747;box-shadow:inset 0 0 0 1px #5e5e5e;border-radius:2px;"></div>
<div class="a t" style="left:475.70px;top:449.3px;line-height:14px;font-size:12px;color:#d8d8d8;transform:scaleX(1.0000);transform-origin:0 0;">話数(I)</div>
<div class="a" style="left:586px;top:445px;width:40px;height:24.5px;background:#383838;border-radius:2px;"></div>
<div class="a t" style="left:592px;top:449.3px;line-height:14px;font-size:12px;color:#6a6a6a;">1</div>
<svg class="a" style="left:638.25px;top:451.0px;" width="7.5" height="12" viewBox="0 0 7.5 12"><path d="M1 1 L6.5 6.0 L1 11" fill="none" stroke="#555" stroke-width="1.3"/></svg>
<div class="a t" style="left:508.11px;top:479.90000000000003px;line-height:14px;font-size:12px;color:#d8d8d8;transform:scaleX(0.7944);transform-origin:0 0;">サブタイトル(U):</div>
<div class="a" style="left:586px;top:475.5px;width:192px;height:24.5px;background:#474747;box-shadow:inset 0 0 0 1px #5a5a5a;border-radius:2px;"></div>
<div class="a t" style="left:527.40px;top:509.3px;line-height:14px;font-size:12px;color:#d8d8d8;transform:scaleX(0.9815);transform-origin:0 0;">作者名(A):</div>
<div class="a" style="left:586px;top:505px;width:192px;height:24.5px;background:#474747;box-shadow:inset 0 0 0 1px #5a5a5a;border-radius:2px;"></div>
<div class="a" style="left:783.5px;top:505px;width:89.5px;height:24.5px;background:#474747;box-shadow:inset 0 0 0 1px #5a5a5a;border-radius:2px;"></div>
<svg class="a" style="left:858.6px;top:513.5px;" width="12" height="7.5" viewBox="0 0 12 7.5"><path d="M1 1 L6.0 6.5 L11 1" fill="none" stroke="#c4c4c4" stroke-width="1.3"/></svg>
<div class="a t" style="left:815.20px;top:509.3px;line-height:14px;font-size:12px;color:#d8d8d8;transform:scaleX(0.9167);transform-origin:0 0;">下</div>
<div class="a" style="left:456px;top:539px;width:16px;height:16px;background:#474747;box-shadow:inset 0 0 0 1px #5e5e5e;border-radius:2px;"></div>
<div class="a t" style="left:474.79px;top:538.8px;line-height:14px;font-size:12px;color:#d8d8d8;transform:scaleX(0.9132);transform-origin:0 0;">ページ番号(G)</div>
<div class="a" style="left:586px;top:535px;width:90px;height:25px;background:#383838;border-radius:2px;"></div>
<div class="a t" style="left:324px;width:600px;text-align:center;top:539.8px;line-height:14px;font-size:12px;color:#7a7a7a;">下</div>
<svg class="a" style="left:661.5px;top:543.75px;" width="12" height="7.5" viewBox="0 0 12 7.5"><path d="M1 1 L6.0 6.5 L11 1" fill="none" stroke="#7a7a7a" stroke-width="1.3"/></svg>
<div class="a t" style="left:693.50px;top:539.3px;line-height:14px;font-size:12px;color:#d8d8d8;transform:scaleX(1.0000);transform-origin:0 0;">開始番号(R):</div>
<div class="a" style="left:766px;top:535px;width:40px;height:25px;background:#383838;border-radius:2px;"></div>
<div class="a t" style="left:772px;top:539.3px;line-height:14px;font-size:12px;color:#6a6a6a;">1</div>
<svg class="a" style="left:814.25px;top:541.0px;" width="7.5" height="12" viewBox="0 0 7.5 12"><path d="M1 1 L6.5 6.0 L1 11" fill="none" stroke="#555" stroke-width="1.3"/></svg>
<div class="a" style="left:461px;top:571px;width:2px;height:1.5px;background:#cccccc;"></div>
<div class="a" style="left:464px;top:571px;width:2px;height:1.5px;background:#cccccc;"></div>
<div class="a t" style="left:867.73px;top:622.3px;line-height:14px;font-size:12px;color:#d8d8d8;transform:scaleX(0.8750);transform-origin:0 0;">m</div>
<div class="a" style="left:466px;top:742.5px;width:16px;height:16.0px;background:#474747;box-shadow:inset 0 0 0 1px #5e5e5e;border-radius:2px;"></div>
<div class="a t" style="left:485.17px;top:743.5px;line-height:14px;font-size:12px;color:#d8d8d8;transform:scaleX(0.8345);transform-origin:0 0;">隠しノンブル(H)</div>
<div class="a" style="left:437px;top:572px;width:431px;height:174.5px;background:#232323;"></div>
<div class="a" style="left:441px;top:575.5px;width:207px;height:163.5px;background:#353535;"></div>
<div class="a" style="left:660px;top:576px;width:206px;height:163px;background:#353535;"></div>
<div class="a" style="left:665px;top:578px;width:196px;height:159px;background:#525c75;border-radius:3px;"></div>
<svg class="a" style="left:450px;top:594px;" width="91" height="126" viewBox="0 0 91 126"><rect x="0.5" y="0.5" width="90" height="125" fill="#fff" stroke="#111" stroke-width="1"/>
<rect x="7.5" y="10.5" width="76" height="104" fill="none" stroke="#a8b6e6" stroke-width="1"/>
<rect x="9.5" y="11.5" width="72" height="102" fill="none" stroke="#c0c9ec" stroke-width="1"/>
<rect x="14.5" y="18.5" width="62" height="88" fill="none" stroke="#c0c9ec" stroke-width="1"/>
<path d="M9.5 7 L9.5 15 M81.5 7 L81.5 15 M9.5 110 L9.5 118 M81.5 110 L81.5 118 M5 10.5 L11 10.5 M80 10.5 L86 10.5 M5 114.5 L11 114.5 M80 114.5 L86 114.5 M41 8.5 L50 8.5 M45.5 6 L45.5 11 M41 116.5 L50 116.5 M45.5 114 L45.5 119 M5.5 58 L5.5 67 M3 62.5 L8 62.5 M85.5 58 L85.5 67 M83 62.5 L88 62.5" fill="none" stroke="#a8b6e6" stroke-width="1"/></svg>
<svg class="a" style="left:549px;top:594px;" width="91" height="126" viewBox="0 0 91 126"><rect x="0.5" y="0.5" width="90" height="125" fill="#fff" stroke="#111" stroke-width="1"/>
<rect x="7.5" y="10.5" width="76" height="104" fill="none" stroke="#a8b6e6" stroke-width="1"/>
<rect x="9.5" y="11.5" width="72" height="102" fill="none" stroke="#c0c9ec" stroke-width="1"/>
<rect x="14.5" y="18.5" width="62" height="88" fill="none" stroke="#c0c9ec" stroke-width="1"/>
<path d="M9.5 7 L9.5 15 M81.5 7 L81.5 15 M9.5 110 L9.5 118 M81.5 110 L81.5 118 M5 10.5 L11 10.5 M80 10.5 L86 10.5 M5 114.5 L11 114.5 M80 114.5 L86 114.5 M41 8.5 L50 8.5 M45.5 6 L45.5 11 M41 116.5 L50 116.5 M45.5 114 L45.5 119 M5.5 58 L5.5 67 M3 62.5 L8 62.5 M85.5 58 L85.5 67 M83 62.5 L88 62.5" fill="none" stroke="#a8b6e6" stroke-width="1"/></svg>
<div class="a t" style="left:465.51px;top:721.8px;line-height:14px;font-size:12px;color:#dcdcdc;transform:scaleX(1.0426);transform-origin:0 0;">裏表紙(裏)</div>
<div class="a t" style="left:570.40px;top:721.8px;line-height:14px;font-size:12px;color:#dcdcdc;transform:scaleX(1.0548);transform-origin:0 0;">表紙(裏)</div>
<svg class="a" style="left:673px;top:594px;" width="179" height="127" viewBox="0 0 179 127"><rect x="0.5" y="0.5" width="178" height="126" fill="#fff" stroke="#111" stroke-width="1"/>
<path d="M89.5 1 L89.5 126" stroke="#a8b6e6" stroke-width="1"/>
<rect x="13.5" y="10.5" width="152" height="105" fill="none" stroke="#a8b6e6" stroke-width="1"/>
<rect x="16.5" y="12.5" width="146" height="101" fill="none" stroke="#c0c9ec" stroke-width="1"/>
<rect x="21.5" y="19.5" width="61" height="88" fill="none" stroke="#c0c9ec" stroke-width="1"/>
<rect x="96.5" y="19.5" width="61" height="88" fill="none" stroke="#c0c9ec" stroke-width="1"/>
<path d="M16.5 7 L16.5 15 M162.5 7 L162.5 15 M16.5 111 L16.5 119 M162.5 111 L162.5 119 M11 10.5 L19 10.5 M160 10.5 L168 10.5 M11 115.5 L19 115.5 M160 115.5 L168 115.5 M44 8.5 L53 8.5 M48.5 6 L48.5 11 M123 8.5 L132 8.5 M127.5 6 L127.5 11 M44 117.5 L53 117.5 M48.5 115 L48.5 120 M123 117.5 L132 117.5 M127.5 115 L127.5 120 M12.5 60 L12.5 69 M10 64.5 L15 64.5 M166.5 60 L166.5 69 M164 64.5 L169 64.5" fill="none" stroke="#a8b6e6" stroke-width="1"/>
<rect x="87" y="7" width="5" height="4" fill="#a8b6e6"/><rect x="87" y="115" width="5" height="4" fill="#a8b6e6"/></svg>
<div class="a" style="left:667px;top:586px;width:187px;height:132px;border:2px solid #e8141a"></div>
<div class="a t" style="left:696.96px;top:721.8px;line-height:14px;font-size:12px;color:#dcdcdc;transform:scaleX(1.0435);transform-origin:0 0;">表紙</div>
<div class="a t" style="left:795.80px;top:721.8px;line-height:14px;font-size:12px;color:#dcdcdc;transform:scaleX(1.0000);transform-origin:0 0;">裏表紙</div>
</body></html>
